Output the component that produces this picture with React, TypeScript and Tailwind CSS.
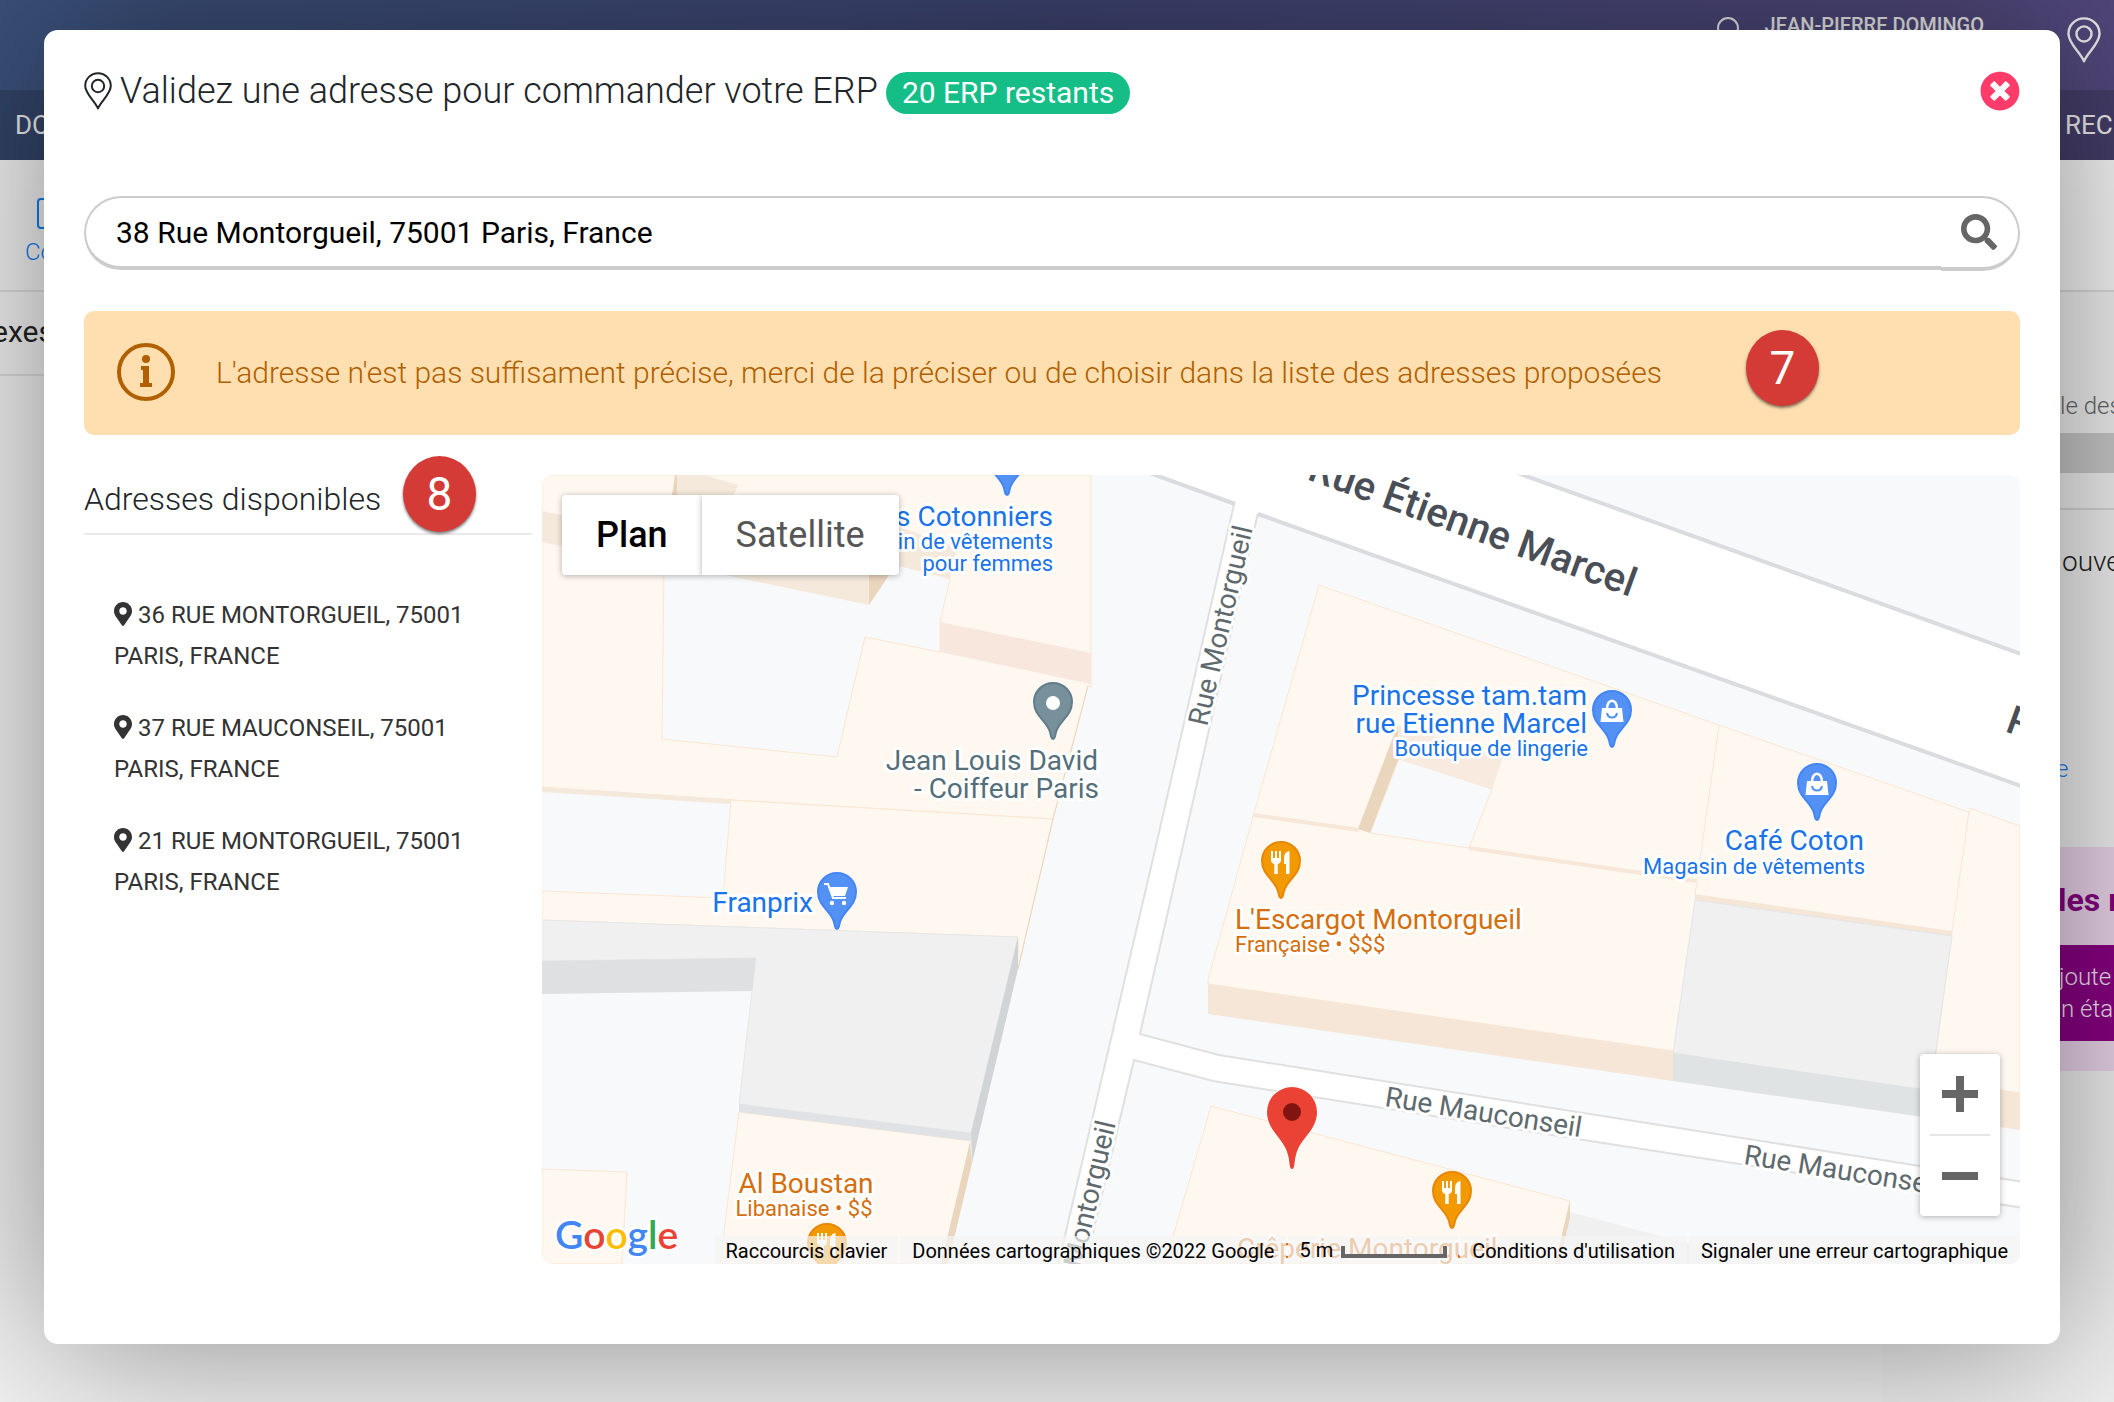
import React from 'react';
import { FaMapMarkerAlt, FaSearch, FaTimesCircle } from 'react-icons/fa';

const addresses = [
  '36 Rue Montorgueil, 75001 Paris, France',
  '37 Rue Mauconseil, 75001 Paris, France',
  '21 Rue Montorgueil, 75001 Paris, France',
];

type PoiKind = 'shop' | 'cart' | 'food' | 'plain';

const poiColors: Record<PoiKind, { fill: string; stroke: string }> = {
  shop: { fill: '#5491f5', stroke: '#4285f4' },
  cart: { fill: '#5491f5', stroke: '#4285f4' },
  food: { fill: '#f29900', stroke: '#e88605' },
  plain: { fill: '#78909c', stroke: '#607d8b' },
};

const pois: { x: number; y: number; kind: PoiKind }[] = [
  { x: 1007, y: 496, kind: 'shop' },
  { x: 1053, y: 740, kind: 'plain' },
  { x: 837, y: 930, kind: 'cart' },
  { x: 1281, y: 899, kind: 'food' },
  { x: 1452, y: 1229, kind: 'food' },
  { x: 827, y: 1281, kind: 'food' },
  { x: 1612, y: 748, kind: 'shop' },
  { x: 1817, y: 821, kind: 'shop' },
];

const LocationPin: React.FC<{ className?: string }> = ({ className }) => (
  <svg viewBox="0 0 28 38" fill="none" stroke="currentColor" className={className} aria-hidden="true">
    <path d="M14 36.5C11 29 1.2 22 1.2 13.8a12.8 12.6 0 0 1 25.6 0C26.8 22 17 29 14 36.5Z" strokeWidth="2" strokeLinejoin="round" />
    <circle cx="14" cy="14" r="6.2" strokeWidth="2" />
  </svg>
);

const StepBadge: React.FC<{ value: number; className: string }> = ({ value, className }) => (
  <span className={`absolute flex h-[76px] w-[73px] items-center justify-center rounded-[50%] bg-[#d43b36] text-[46px] font-normal text-white shadow-[0_2px_3px_rgba(0,0,0,0.5)] ${className}`}>
    {value}
  </span>
);

const Poi: React.FC<{ x: number; y: number; kind: PoiKind }> = ({ x, y, kind }) => (
  <g transform={`translate(${x} ${y})`}>
    <path
      d="M0 -1C-2 -1 -2 -4 -3 -8C-6 -19 -19 -24 -19 -38A19 19 0 0 1 19 -38C19 -24 6 -19 3 -8C2 -4 2 -1 0 -1Z"
      fill={poiColors[kind].fill}
      stroke={poiColors[kind].stroke}
      strokeWidth="2"
    />
    {kind === 'plain' && <circle cx="0" cy="-37" r="7" fill="#fff" />}
    {kind === 'shop' && (
      <g>
        <path d="M-10 -40H10L11.500 -26H-11.500Z" fill="#fff" />
        <path d="M-5 -39C-5 -50 5 -50 5 -39" fill="none" stroke="#fff" strokeWidth="2.500" />
        <path d="M-5 -35C-4 -29 4 -29 5 -35" fill="none" stroke="#5491f5" strokeWidth="2" />
      </g>
    )}
    {kind === 'cart' && (
      <g>
        <path d="M-13 -46H-9L-4 -32H9" fill="none" stroke="#fff" strokeWidth="2" />
        <path d="M-8 -43H11L8 -34H-5Z" fill="#fff" />
        <circle cx="-5" cy="-27" r="2.200" fill="#fff" />
        <circle cx="7" cy="-27" r="2.200" fill="#fff" />
      </g>
    )}
    {kind === 'food' && (
      <path
        d="M-10 -48H-8V-41H-6V-48H-4V-41H-2V-48H0V-39Q0 -36 -3.300 -35V-25H-6.700V-35Q-10 -36 -10 -39ZM8.500 -48V-25H5V-35H3V-41Q3 -47 8.500 -48Z"
        fill="#fff"
      />
    )}
  </g>
);

const MapDrawing: React.FC = () => (
  <svg viewBox="542 475 1478 789" preserveAspectRatio="xMidYMid slice" className="h-full w-full" role="img" aria-label="Carte">
    <rect x="542" y="475" width="1478" height="789" fill="#f8f9fb" />

    {/* Buildings, west side */}
    <g fill="#fef8f1" stroke="#fbe6d0" strokeWidth="1">
      <path d="M542 475H1091V688L1088 686L1053 819L731 800L542 787Z" />
      <path d="M731 800L1053 819L1018 969V937L542 920V891L723 898Z" />
      <path d="M739 1112L971 1141L942 1264H720Z" />
      <path d="M542 1169L627 1172L622 1264H542Z" />
    </g>
    <path d="M664 560H889L950 579L940 622V652L865 637L837 757L662 739Z" fill="#f8f9fb" stroke="#fbe6d0" />
    <g fill="#f5e9dc">
      <path d="M542 511L562 515V546L542 542Z" />
      <path d="M677 475H704L738 485L734 495H677Z" />
      <path d="M725 575L790 540H869V605Z" />
      <path d="M895 525L957 548L950 579L895 565Z" />
      <path d="M542 787L731 799V804L542 792Z" />
    </g>
    <path d="M940 622L1091 653V684L940 652Z" fill="#f7e7dd" />
    <g fill="#ead5bd">
      <path d="M675 475H677V495H672Z" />
      <path d="M869 560H895L889 575L869 605Z" />
      <path d="M970 1142L972 1163L948 1264H941Z" />
    </g>
    <path d="M1088 686L1053 819L1018 969" fill="none" stroke="#ecd6bd" strokeWidth="1" />
    <path d="M542 920L1018 937L971 1133L739 1104L752 991L756 958L542 961Z" fill="#f0f0f0" stroke="#e6e7e8" />
    <path d="M542 961L756 958L752 991L542 994Z" fill="#dfe0e2" />
    <path d="M1018 937V969L972 1163L971 1133Z" fill="#d0d4d6" />
    <path d="M739 1104L971 1133V1141L739 1112Z" fill="#e1e2e6" />

    {/* Buildings, east side */}
    <g fill="#fef8f1" stroke="#fbe6d0" strokeWidth="1">
      <path d="M1319 585L1719 725L1969 812L1970 808L2020 826V1093L1930 1080L1673 1051L1208 984V980L1254 813Z" />
      <path d="M1211 1106L1570 1201L1556 1264H1165Z" />
      <path d="M1719 725L1695 895M1969 812L1952 931L1936 1053" fill="none" />
    </g>
    <path d="M1399 759L1492 789L1469 848L1370 833Z" fill="#f8f9fb" stroke="#fbe6d0" />
    <path d="M1398 725L1503 757L1492 789L1399 759Z" fill="#f8eadf" />
    <path d="M1398 724V760L1370 833L1358 829Z" fill="#ead5bd" />
    <path d="M1254 815L1359 830M1469 848L1696 881" stroke="#f6e7d9" strokeWidth="4" />
    <g fill="#f5e6d8">
      <path d="M1208 984L1673 1051V1081L1208 1014Z" />
      <path d="M1695 894L1952 931V937L1695 900Z" />
      <path d="M1930 1080L2020 1093V1130L1930 1117Z" />
    </g>
    <path d="M1695 900L1952 936L1930 1092L1673 1053Z" fill="#f0f0f0" stroke="#e3e5e6" />
    <path d="M1673 1053L1930 1090V1118L1673 1081Z" fill="#dfe3e4" />
    <path d="M1570 1212L1690 1244L1764 1264H1556Z" fill="#f0f0f0" />
    <path d="M1570 1201V1218L1559 1264H1555Z" fill="#ead5bd" />

    {/* Streets */}
    <g stroke="#e0e0e0" strokeWidth="2" fill="#fff">
      <path d="M1235 500L1155 850L1057 1270H1084L1134 1060L1213 1081L1590 1141L2024 1208V1182L1920 1166L1590 1114L1219 1055L1140 1034L1182 850L1259 508Z" />
    </g>
    <path d="M1149 475H1517L2020 654V786L1258 514L1235 504Z" fill="#fff" />
    <path d="M1147 472L1235 504M1258 514L2024 787M1512 471L2024 655" stroke="#dadce0" strokeWidth="4" />

    <g stroke="#fff" strokeLinejoin="round" paintOrder="stroke" strokeWidth="6">
      <g fontSize="28" fill="#5f6a6e">
        <text transform="translate(1207 727) rotate(-77)">Rue Montorgueil</text>
        <text transform="translate(1070 1322) rotate(-77)">Rue Montorgueil</text>
        <text transform="translate(1384 1106) rotate(9)">Rue Mauconseil</text>
        <text transform="translate(1743 1164) rotate(9)">Rue Mauconseil</text>
      </g>
      <g fontSize="40" fontWeight="500" fill="#4a4f57">
        <text transform="translate(1306 479) rotate(20)">Rue Étienne Marcel</text>
        <text transform="translate(2004 731) rotate(20)">Rue</text>
      </g>
    </g>

    {pois.map((poi) => (
      <Poi key={`${poi.x}-${poi.y}`} {...poi} />
    ))}

    <g stroke="#fff" strokeLinejoin="round" paintOrder="stroke" strokeWidth="6" fontSize="28">
      <g fill="#1a73e8" textAnchor="end">
        <text x="1053" y="526">s Cotonniers</text>
        <text x="1053" y="549" fontSize="22">in de vêtements</text>
        <text x="1053" y="571" fontSize="22">pour femmes</text>
        <text x="1587" y="705">Princesse tam.tam</text>
        <text x="1587" y="733">rue Etienne Marcel</text>
        <text x="1588" y="756" fontSize="22">Boutique de lingerie</text>
        <text x="1864" y="850">Café Coton</text>
        <text x="1865" y="874" fontSize="22">Magasin de vêtements</text>
        <text x="813" y="912">Franprix</text>
      </g>
      <g fill="#546e7a" textAnchor="end">
        <text x="1098" y="770">Jean Louis David</text>
        <text x="1099" y="798">- Coiffeur Paris</text>
      </g>
      <g fill="#d56e0c">
        <text x="1235" y="929">L'Escargot Montorgueil</text>
        <text x="1235" y="952" fontSize="22">Française • $$$</text>
        <text x="1237" y="1258">Crêperie Montorgueil</text>
        <text x="806" y="1193" textAnchor="middle">Al Boustan</text>
        <text x="804" y="1216" textAnchor="middle" fontSize="22">Libanaise • $$</text>
      </g>
    </g>

    {/* Selected address */}
    <path
      d="M1292 1169C1289 1169 1290 1162 1288 1155C1284 1138 1267 1131 1267 1112A25 25 0 0 1 1317 1112C1317 1131 1300 1138 1296 1155C1294 1162 1295 1169 1292 1169Z"
      fill="#ea4335"
      stroke="#fff"
      strokeWidth="2"
      paintOrder="stroke"
    />
    <circle cx="1292" cy="1112" r="9" fill="#811411" />

    <text x="555" y="1249" fontFamily="Lato, sans-serif" fontSize="39" fontWeight="600" stroke="#fff" strokeWidth="5" paintOrder="stroke">
      <tspan fill="#4285f4">G</tspan>
      <tspan fill="#ea4335">o</tspan>
      <tspan fill="#fbbc04">o</tspan>
      <tspan fill="#4285f4">g</tspan>
      <tspan fill="#34a853">l</tspan>
      <tspan fill="#ea4335">e</tspan>
    </text>
  </svg>
);

const MapPanel: React.FC = () => (
  <section className="relative aspect-[1478/789] min-w-0 flex-1 overflow-hidden rounded-[10px]">
    <MapDrawing />

    <div className="absolute left-5 top-5 flex h-20 text-[36px]">
      <button className="rounded-l bg-white px-[34px] font-medium text-black shadow-[0_1px_6px_rgba(0,0,0,0.3)]">Plan</button>
      <button className="rounded-r bg-white px-[34px] text-[#565656] shadow-[0_1px_6px_rgba(0,0,0,0.3)]">Satellite</button>
    </div>

    <div className="absolute bottom-12 right-5 flex w-20 flex-col items-center rounded bg-white shadow-[0_1px_6px_rgba(0,0,0,0.3)]">
      <button aria-label="Zoom avant" className="flex h-20 w-full items-center justify-center">
        <svg viewBox="0 0 36 36" className="h-9 w-9" fill="#666">
          <path d="M14 0h8v14h14v8H22v14h-8V22H0v-8h14z" />
        </svg>
      </button>
      <div className="h-[2px] w-[60px] bg-[#e6e6e6]" />
      <button aria-label="Zoom arrière" className="flex h-20 w-full items-center justify-center">
        <svg viewBox="0 0 36 36" className="h-9 w-9" fill="#666">
          <path d="M0 14h36v8H0z" />
        </svg>
      </button>
    </div>

    <div className="absolute bottom-0 right-0 flex h-7 gap-[2px] whitespace-nowrap text-[20px] leading-[30px] text-black">
      <button className="bg-[#f5f5f5]/70 px-[11px]">Raccourcis clavier</button>
      <span className="bg-[#f5f5f5]/70 px-3">Données cartographiques ©2022 Google</span>
      <span className="flex items-center gap-2 bg-[#f5f5f5]/70 px-[11px]">
        5 m
        <span className="mt-1 h-3 w-[106px] border-4 border-t-0 border-[#666]" />
      </span>
      <a href="#conditions" className="bg-[#f5f5f5]/70 px-3">Conditions d'utilisation</a>
      <a href="#erreur" className="bg-[#f5f5f5]/70 px-3">Signaler une erreur cartographique</a>
    </div>
  </section>
);

/* Dimmed page behind the dialog */
const Backdrop: React.FC = () => (
  <div className="flex min-h-screen flex-col whitespace-nowrap bg-[#f3f3f3]" aria-hidden="true">
    <div className="bg-linear-to-r from-[#3b517b] via-[#3e4572] to-[#52487c] text-[#ececec]">
      <div className="flex h-[90px] items-start justify-end gap-[26px] pr-[13px] pt-[13px] text-[20px] leading-6">
        <svg viewBox="0 0 24 40" className="h-10 w-6" fill="none" stroke="currentColor" strokeWidth="2">
          <circle cx="13" cy="15" r="10" />
        </svg>
        <span className="pr-[57px] font-medium">JEAN-PIERRE DOMINGO</span>
        <LocationPin className="mt-[3px] h-12 w-[34px]" />
      </div>
      <div className="flex h-[70px] items-center justify-between bg-black/15 pl-[15px] text-[26px]">
        <span>DO</span>
        <span className="w-[49px] overflow-hidden">REC</span>
      </div>
    </div>
    <div className="flex flex-1 justify-between">
      <div className="w-20 font-light">
        <div className="h-[132px] border-b-2 border-[#dedede] pl-[25px] pt-[38px] text-[24px] leading-[30px] text-[#0f7df5]">
          <div className="mb-2 ml-3 h-[31px] w-8 rounded border-2 border-[#0f7df5]" />
          Co
        </div>
        <div className="-ml-2 flex h-[84px] items-center border-b-2 border-[#dedede] pb-[3px] text-[30px] font-normal text-[#222]">exes</div>
      </div>
      <div className="w-[232px] overflow-hidden bg-[#f0f0f0] font-light">
        <div className="h-[132px] border-b-2 border-[#dadada] bg-[#f6f6f6]" />
        <div className="flex h-[141px] items-end justify-end pb-[9px] text-[24px] text-[#666]">
          <span className="w-[54px]">le des</span>
        </div>
        <div className="h-10 bg-[#c8c8c8]" />
        <div className="flex h-[37px] border-b-2 border-[#d6d6d6]" />
        <div className="flex h-[104px] items-center justify-end text-[28px] text-[#222]">
          <span className="w-[52px]">ouve</span>
        </div>
        <div className="flex h-[233px] items-center justify-end pb-[2px] pt-[50px] text-[24px] text-[#0f7df5]">
          <span className="w-[58px] pt-7">e</span>
        </div>
        <div className="h-[224px] bg-[#ead4ea] text-[#85007f]">
          <div className="flex h-[98px] items-center justify-end pt-2 text-[32px] font-bold">
            <span className="w-[56px]">les r</span>
          </div>
          <div className="flex h-24 flex-col items-end justify-center bg-[#880082] text-[24px] leading-8 text-[#f3e6f3]">
            <span className="w-[70px]">Ajoute</span>
            <span className="w-[53px]">n éta</span>
          </div>
        </div>
      </div>
    </div>
  </div>
);

export default function App() {
  return (
    <div className="relative min-h-screen overflow-hidden font-[Roboto,sans-serif]">
      <Backdrop />

      <div className="absolute inset-0 pl-11 pr-[54px] pt-[30px]">
        <div role="dialog" aria-labelledby="dialog-title" className="rounded-[14px] bg-white px-10 pb-20 pt-10 text-[#212529] shadow-[0_0_170px_rgba(0,0,0,0.45)]">
          <header className="mb-[84px] flex h-[42px] items-center">
            <LocationPin className="mr-2 h-[38px] w-7" />
            <h1 id="dialog-title" className="text-[36px] font-light leading-[42px]">Validez une adresse pour commander votre ERP</h1>
            <span className="ml-2 mt-[4px] h-[42px] rounded-full bg-[#15be87] px-4 text-[30px] leading-[42px] text-white">20 ERP restants</span>
            <button aria-label="Fermer" className="ml-auto text-[40px] text-[#ff3b69]">
              <FaTimesCircle />
            </button>
          </header>

          <form className="mb-10 flex items-start">
            <input
              type="text"
              aria-label="Adresse"
              defaultValue="38 Rue Montorgueil, 75001 Paris, France"
              className="h-[74px] min-w-0 flex-1 rounded-l-full border-2 border-b-4 border-r-0 border-[#ccc] pl-[30px] text-[30px] text-black outline-none"
            />
            <button type="button" aria-label="Rechercher" className="flex h-[75px] w-[79px] items-center rounded-r-full border-2 border-b-4 border-l-0 border-[#ccc] pb-[2px] pl-5 text-[36px] text-[#666]">
              <FaSearch />
            </button>
          </form>

          <div role="alert" className="relative mb-10 flex h-[124px] items-center gap-10 rounded-[10px] bg-[#ffdfb0] px-8 pb-[2px] text-[30px] font-light text-[#b06000]">
            <svg viewBox="0 0 60 60" className="h-[60px] w-[60px]" aria-hidden="true">
              <circle cx="30" cy="30" r="27" fill="none" stroke="currentColor" strokeWidth="4" />
              <circle cx="30" cy="17" r="4" fill="currentColor" />
              <path d="M25 24h8v17h3v4H24v-4h3V28h-2z" fill="currentColor" />
            </svg>
            <p>L'adresse n'est pas suffisament précise, merci de la préciser ou de choisir dans la liste des adresses proposées</p>
            <StepBadge value={7} className="right-[201px] top-[19px]" />
          </div>

          <div className="flex items-start gap-[10px]">
            <aside className="relative w-[448px] shrink-0">
              <h2 className="border-b-2 border-[#eaeaea] pb-[10px] text-[32px] font-light leading-[48px]">Adresses disponibles</h2>
              <StepBadge value={8} className="-top-[19px] left-[319px]" />
              <ul className="mt-[60px] flex flex-col gap-[31px] pl-[30px] pr-[60px]">
                {addresses.map((address) => (
                  <li key={address}>
                    <button className="text-left text-[24px] uppercase leading-[41px] text-[#333]">
                      <FaMapMarkerAlt className="mr-[6px] inline w-[18px] align-[-3px]" />
                      {address}
                    </button>
                  </li>
                ))}
              </ul>
            </aside>
            <MapPanel />
          </div>
        </div>
      </div>
    </div>
  );
}
